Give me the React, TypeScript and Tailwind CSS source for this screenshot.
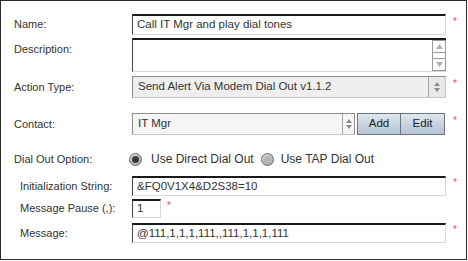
import React from 'react';

const Star: React.FC<{ className?: string }> = ({ className = '' }) => (
  <span className={`text-[#d9534f] text-[10px] leading-none ${className}`}>*</span>
);

const Label: React.FC<{ children: React.ReactNode; indent?: boolean }> = ({ children, indent }) => (
  <div className={`w-[118px] shrink-0 whitespace-nowrap text-[11px] ${indent ? 'pl-[6px]' : ''}`}>{children}</div>
);

const Spinner: React.FC<{ className?: string }> = ({ className = '' }) => (
  <div className={`flex flex-col items-center justify-center gap-[2px] ${className}`}>
    <svg width="6" height="4" viewBox="0 0 6 4"><path d="M3 0L6 4H0z" fill="#8a8a8a" /></svg>
    <svg width="6" height="4" viewBox="0 0 6 4"><path d="M0 0H6L3 4z" fill="#8a8a8a" /></svg>
  </div>
);

const TextBox: React.FC<{ value: string; className?: string }> = ({ value, className = '' }) => (
  <div className={`h-full flex items-center pl-[4px] bg-white whitespace-nowrap border-t-2 border-t-[#1a1a1a] border-l border-l-[#444] border-r border-r-[#d8d8d8] border-b border-b-[#d8d8d8] ${className}`}>
    {value}
  </div>
);

const Radio: React.FC<{ checked?: boolean }> = ({ checked }) => (
  <div className="w-[13px] h-[13px] rounded-full border border-[#6d6d6d] bg-[radial-gradient(circle_at_40%_35%,#e6e6e6,#9a9a9a)] flex items-center justify-center">
    <div className={`w-[7px] h-[7px] rounded-full ${checked ? 'bg-[#3a3a3a]' : 'bg-[#b5b5b5]'}`} />
  </div>
);

export default function App() {
  return (
    <div className="w-[468px] h-[261px] bg-white" style={{ fontFamily: '"Liberation Sans", Arial, sans-serif' }}>
      <div className="w-[467px] h-[260px] border border-[#2b2b2b] pl-[13px] pt-[13px] text-[11.5px] text-[#333]">
        {/* Name */}
        <div className="flex items-center h-[21px]">
          <Label>Name:</Label>
          <TextBox value="Call IT Mgr and play dial tones" className="w-[314px]" />
          <Star className="ml-[7px] -mt-[6px]" />
        </div>

        {/* Description */}
        <div className="flex items-start h-[34px] mt-[3px]">
          <Label><div className="pt-[3px]">Description:</div></Label>
          <div className="w-[314px] h-full flex bg-white border-t-2 border-t-[#1a1a1a] border-l border-l-[#444] border-b border-b-[#d8d8d8]">
            <div className="flex-1" />
            <div className="w-[14px] h-full flex flex-col border border-[#9a9a9a] bg-white">
              <div className="h-[12px] flex items-center justify-center border-b border-[#9a9a9a]">
                <svg width="7" height="5" viewBox="0 0 7 5"><path d="M3.5 0L7 5H0z" fill="#b0b0b0" /></svg>
              </div>
              <div className="flex-1" />
              <div className="h-[12px] flex items-center justify-center border-t border-[#9a9a9a]">
                <svg width="7" height="5" viewBox="0 0 7 5"><path d="M0 0H7L3.5 5z" fill="#b0b0b0" /></svg>
              </div>
            </div>
          </div>
        </div>

        {/* Action Type */}
        <div className="flex items-center h-[22px] mt-[4px]">
          <Label>Action Type:</Label>
          <div className="w-[314px] h-full flex bg-[#efefef] border border-[#8c8c8c] border-b-[#c4c4c4] border-r-[#c4c4c4]">
            <div className="flex-1 flex items-center pl-[5px] whitespace-nowrap">Send Alert Via Modem Dial Out v1.1.2</div>
            <Spinner className="w-[17px] border-l border-[#a8a8a8] bg-[#e8e8e8]" />
          </div>
          <Star className="ml-[7px] -mt-[6px]" />
        </div>

        {/* Contact */}
        <div className="flex items-center h-[22px] mt-[15px]">
          <Label>Contact:</Label>
          <div className="w-[223px] h-full flex bg-[#f5f5f5] border border-[#8c8c8c] border-b-[#c4c4c4]">
            <div className="flex-1 flex items-center pl-[5px]">IT Mgr</div>
            <Spinner className="w-[12px] border-l border-[#a8a8a8]" />
          </div>
          <div className="h-full w-[44px] ml-[2px] flex items-center justify-center border border-[#6b7480] bg-gradient-to-b from-[#dfe6ee] to-[#b5c3d3] text-[#222]">Add</div>
          <div className="h-full w-[44px] flex items-center justify-center border border-l-0 border-[#6b7480] bg-gradient-to-b from-[#dfe6ee] to-[#b5c3d3] text-[#222]">Edit</div>
          <Star className="ml-[8px] -mt-[6px]" />
        </div>

        {/* Dial Out Option */}
        <div className="flex items-center h-[20px] mt-[14px]">
          <Label>Dial Out Option:</Label>
          <div className="flex items-center -ml-[3px] whitespace-nowrap text-[12px]">
            <Radio checked />
            <span className="ml-[9px]">Use Direct Dial Out</span>
            <div className="ml-[7px]"><Radio /></div>
            <span className="ml-[7px]">Use TAP Dial Out</span>
          </div>
        </div>

        {/* Initialization String */}
        <div className="flex items-center h-[20px] mt-[7px]">
          <Label indent>Initialization String:</Label>
          <TextBox value="&FQ0V1X4&D2S38=10" className="w-[314px]" />
          <Star className="ml-[7px] -mt-[6px]" />
        </div>

        {/* Message Pause */}
        <div className="flex items-center h-[19px] mt-[3px]">
          <Label indent>Message Pause (,):</Label>
          <TextBox value="1" className="w-[29px]" />
          <Star className="ml-[6px] -mt-[6px]" />
        </div>

        {/* Message */}
        <div className="flex items-center h-[20px] mt-[5px]">
          <Label indent>Message:</Label>
          <TextBox value="@111,1,1,1,111,,111,1,1,1,111" className="w-[314px]" />
          <Star className="ml-[7px] -mt-[6px]" />
        </div>
      </div>
    </div>
  );
}
